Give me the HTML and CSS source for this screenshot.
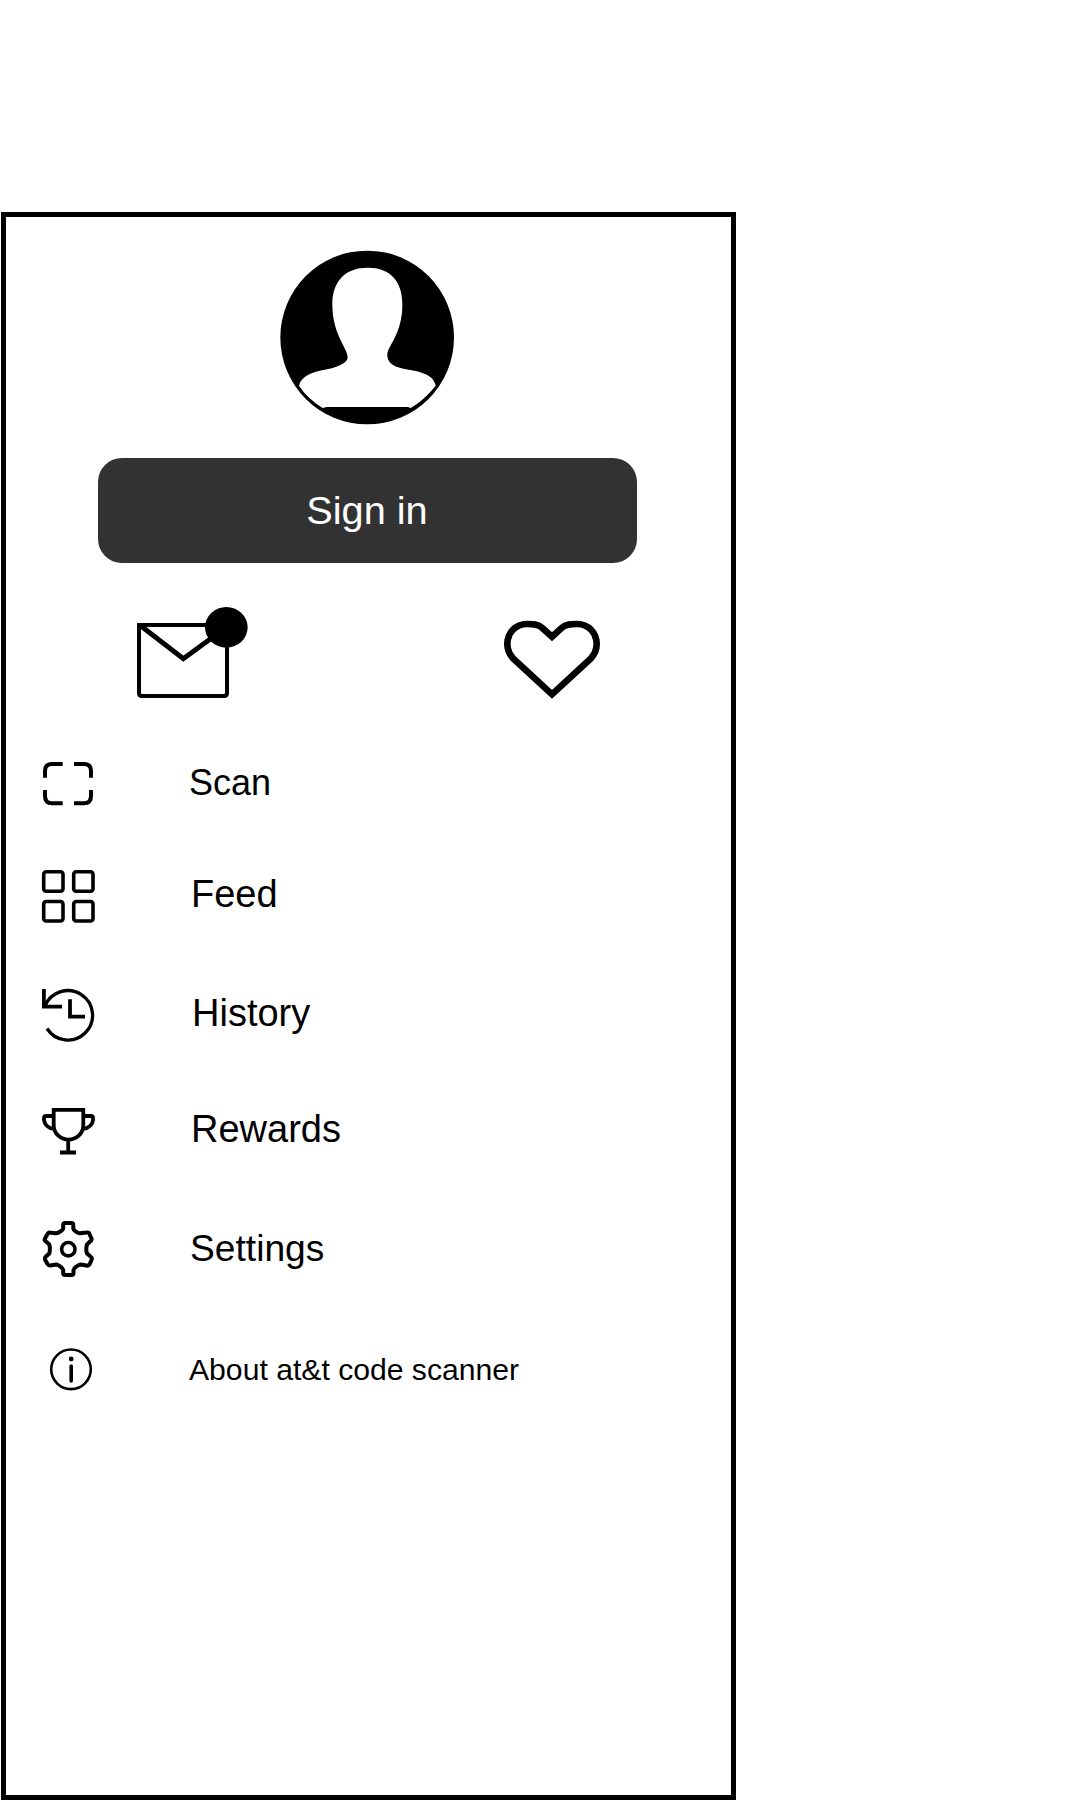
FILE: index.html
```html
<!DOCTYPE html>
<html lang="en">
<head>
<meta charset="utf-8">
<title>Code scanner menu</title>
<link rel="stylesheet" href="styles.css">
</head>
<body>
<main class="panel">
  <svg class="avatar" viewBox="0 0 630 600" aria-hidden="true">
    <ellipse cx="321.500" cy="292.500" rx="260.500" ry="260.500"/>
    <path class="person" d="M323 83C390 83 427 122 427 193C427 267 399 300 383 335C377 360 392 378 430 386C474 393 521 401 527 437C502 468 477 489 452 504L444 501H201L188 504C160 487 136 465 117 437C123 411 151 397 190 390C232 383 260 370 263 354C265 326 217 287 217 193C217 122 257 83 323 83Z"/>
  </svg>
  <button class="sign-in" type="button">Sign in</button>
  <div class="shortcuts">
    <svg viewBox="0 0 450 360" aria-label="Messages">
      <path class="envelope" d="M57 105H321V309Q321 318 312 318H66Q57 318 57 309Z"/>
      <path class="flap" d="M60 106L190 206L319 112"/>
      <ellipse cx="319" cy="112" rx="64" ry="61"/>
    </svg>
    <svg viewBox="0 0 450 360" aria-label="Favorites">
      <path class="heart" d="M216 140L186 113C174 102 160 102 141 102C107 102 82 128 82 163C82 182 88 193 100 206L216 313L332 206C344 193 350 182 350 163C350 128 325 102 291 102C272 102 258 102 246 113Z"/>
    </svg>
  </div>
  <nav class="menu">
    <a class="item scan"><svg viewBox="0 0 60 60"><path stroke-width="4" d="M7 23.700V17Q7 10 14 10H24.700M36 10H46Q53 10 53 17V23.700M53 36V42Q53 49.300 46 49.300H36M24.700 49.300H14Q7 49.300 7 42V36"/></svg><span>Scan</span></a>
    <a class="item feed"><svg viewBox="0 0 60 60"><g stroke-width="3.600"><rect x="5.700" y="4.800" width="19.300" height="19.500" rx="2.500"/><rect x="35.700" y="4.800" width="19.300" height="19.500" rx="2.500"/><rect x="5.700" y="34.500" width="19.300" height="19.500" rx="2.500"/><rect x="35.700" y="34.500" width="19.300" height="19.500" rx="2.500"/></g></svg><span>Feed</span></a>
    <a class="item history"><svg viewBox="0 0 60 60"><path stroke-width="3.300" d="M9 43.500A24.700 24.700 0 1 0 7 21"/><path stroke-width="3.800" d="M5.900 4V21.700H24M32 14.300V31.700H47"/></svg><span>History</span></a>
    <a class="item rewards"><svg viewBox="0 0 60 60"><path stroke-width="3.800" d="M15.700 8.800H45.300V24C45.300 33 38 38.700 30.500 38.700S15.700 33 15.700 24ZM15 15H8Q6 15 6 17V19Q7 26.500 16 28M46 15H53Q55 15 55 17V19Q54 26.500 45 28M30.200 39V51.500M22 51.500H38"/></svg><span>Rewards</span></a>
    <a class="item settings"><svg viewBox="0 0 60 60"><path stroke-width="4" stroke-linejoin="round" d="M25.200 6Q25.200 4 27 4H33.500Q35.300 4 35.300 6V9.500C35.500 11.500 40 14.500 42 14.300L48.500 13.500Q51 13 51.500 15L53.500 19.500Q54 21.500 52 22.500L49 25.500Q47.500 30 49 34.500L52.500 37.500Q54.500 39 53.500 41L51.500 45.500Q50.500 47 48.500 46.500L42.500 45.500C40 46 36 49 35.500 51V54Q35.500 56 33.500 56H27Q25.200 56 25.200 54V51C24.800 49 20.500 46 18.500 45.500L12 46.500Q10.500 46.500 9.500 45L7 40.500Q6.500 38.500 8 37.500L11.300 34.500Q12.500 30 11.300 25.500L8 22.500Q6 21.500 7 19.500L9.500 15Q10.500 13 12 13.700L18 14.300C20.500 14 24.800 11.500 25.200 9.500Z"/><circle cx="30.300" cy="30.200" r="6.700" stroke-width="3.600"/></svg><span>Settings</span></a>
    <a class="item about"><svg viewBox="0 0 60 60"><circle cx="33" cy="30.300" r="19.800" stroke-width="2.600"/><path stroke-width="3.600" stroke-linecap="round" d="M33.200 27V42"/><circle class="dot" cx="33.200" cy="20" r="2.400"/></svg><span>About at&amp;t code scanner</span></a>
  </nav>
</main>
</body>
</html>
```
FILE: styles.css
```css
* { box-sizing: border-box; }

body {
  margin: 0;
  background: #fff;
  color: #000;
  font-family: "Liberation Sans", Arial, sans-serif;
}

.panel {
  display: flex;
  flex-direction: column;
  width: 735px;
  height: 1588px;
  margin: 212px 0 0 1px;
  padding-top: 23px;
  border: 5px solid #000;
}

.avatar {
  width: 210px;
  height: 200px;
  margin-left: 254px;
}

.person { fill: #fff; }

.sign-in {
  width: 539px;
  height: 105px;
  margin: 18px 0 0 92px;
  padding: 0 1px 0 0;
  border: 0;
  border-radius: 24px;
  background: #323232;
  color: #fff;
  font: 39.700px/1 "Liberation Sans", Arial, sans-serif;
}

.shortcuts {
  display: flex;
  gap: 210px;
  margin: 27px 0 0 114px;
}

.shortcuts svg {
  width: 150px;
  height: 120px;
}

.envelope, .flap, .heart {
  fill: none;
  stroke: #000;
}

.envelope { stroke-width: 12; }
.flap { stroke-width: 15; }
.heart { stroke-width: 20; }

.menu { margin: 44px 0 0 32px; }

.item {
  display: flex;
  align-items: center;
  height: 60px;
  font-size: 38px;
  line-height: 44px;
}

.item svg {
  flex: none;
  width: 60px;
  height: 60px;
  fill: none;
  stroke: #000;
}

.item .dot {
  fill: #000;
  stroke: none;
}

.item span {
  padding-bottom: 4px;
  margin-left: 93px;
}

.scan { font-size: 36px; }
.scan span { padding-bottom: 2px; margin-left: 91px; }
.feed { margin-top: 53px; }
.feed span { padding-bottom: 6px; }
.history { margin-top: 58px; }
.history span { margin-left: 94px; }
.rewards { margin-top: 56px; }
.settings { margin-top: 58px; font-size: 37.200px; }
.settings span { padding-bottom: 3px; margin-left: 92px; }
.about { margin-top: 60px; font-size: 30.150px; }
.about span { padding: 1px 0 0; margin-left: 91px; }
```
